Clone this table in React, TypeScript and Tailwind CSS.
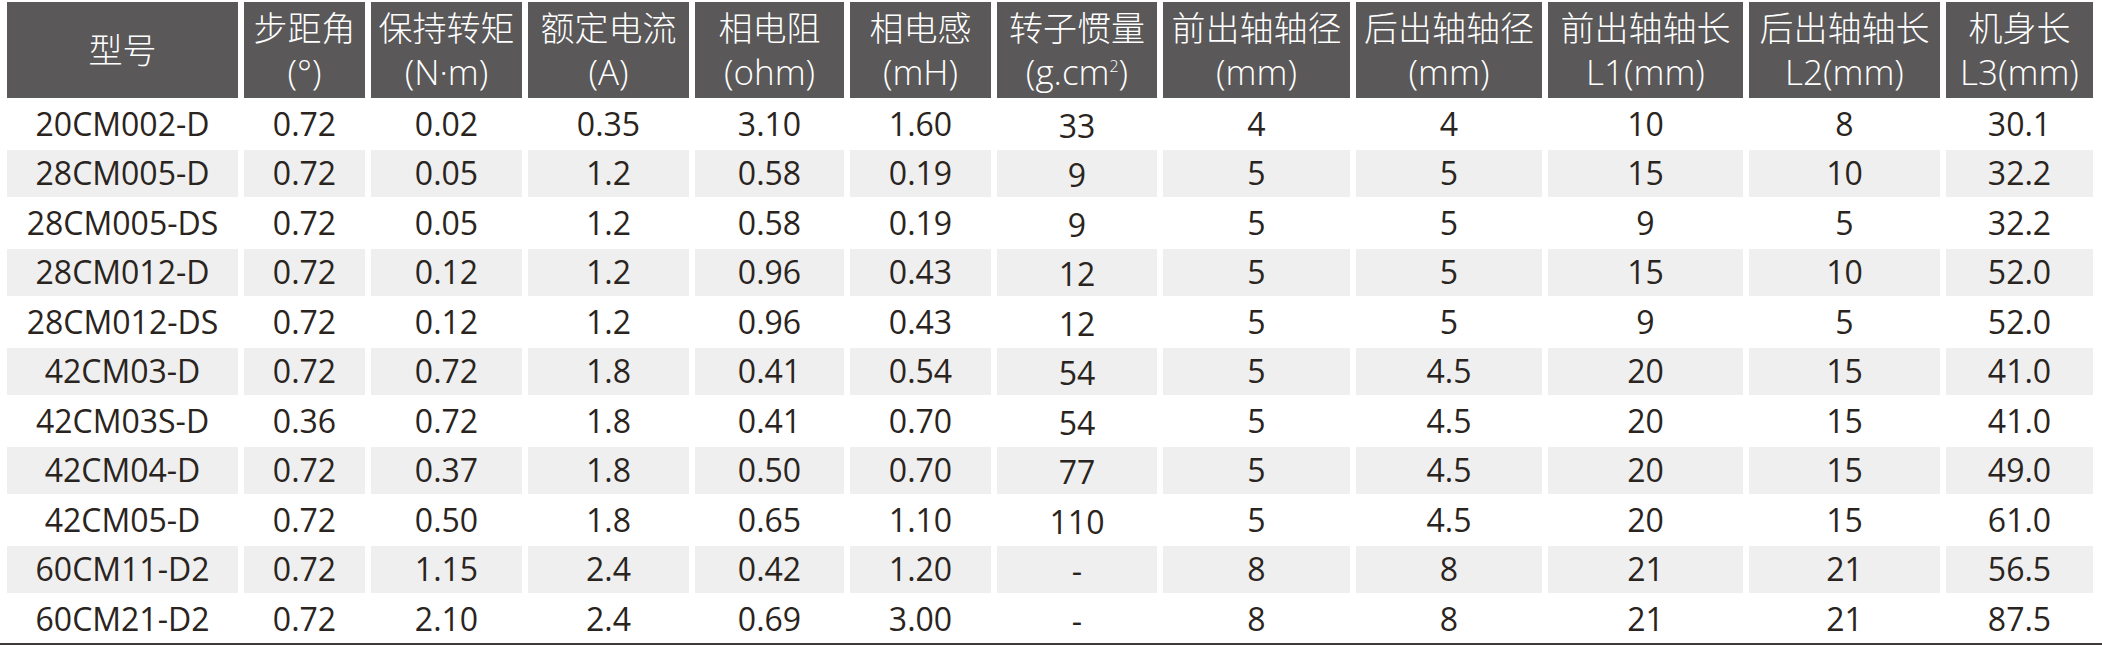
const headers: { top: string; bottom?: React.ReactNode }[] = [
  { top: '型号' },
  { top: '步距角', bottom: '(°)' },
  { top: '保持转矩', bottom: '(N·m)' },
  { top: '额定电流', bottom: '(A)' },
  { top: '相电阻', bottom: '(ohm)' },
  { top: '相电感', bottom: '(mH)' },
  {
    top: '转子惯量',
    bottom: (
      <>
        (g.cm<sup className="text-[16px] relative -top-[13px]">2</sup>)
      </>
    ),
  },
  { top: '前出轴轴径', bottom: '(mm)' },
  { top: '后出轴轴径', bottom: '(mm)' },
  { top: '前出轴轴长', bottom: 'L1(mm)' },
  { top: '后出轴轴长', bottom: 'L2(mm)' },
  { top: '机身长', bottom: 'L3(mm)' },
]

const rows: string[][] = [
  ['20CM002-D', '0.72', '0.02', '0.35', '3.10', '1.60', '33', '4', '4', '10', '8', '30.1'],
  ['28CM005-D', '0.72', '0.05', '1.2', '0.58', '0.19', '9', '5', '5', '15', '10', '32.2'],
  ['28CM005-DS', '0.72', '0.05', '1.2', '0.58', '0.19', '9', '5', '5', '9', '5', '32.2'],
  ['28CM012-D', '0.72', '0.12', '1.2', '0.96', '0.43', '12', '5', '5', '15', '10', '52.0'],
  ['28CM012-DS', '0.72', '0.12', '1.2', '0.96', '0.43', '12', '5', '5', '9', '5', '52.0'],
  ['42CM03-D', '0.72', '0.72', '1.8', '0.41', '0.54', '54', '5', '4.5', '20', '15', '41.0'],
  ['42CM03S-D', '0.36', '0.72', '1.8', '0.41', '0.70', '54', '5', '4.5', '20', '15', '41.0'],
  ['42CM04-D', '0.72', '0.37', '1.8', '0.50', '0.70', '77', '5', '4.5', '20', '15', '49.0'],
  ['42CM05-D', '0.72', '0.50', '1.8', '0.65', '1.10', '110', '5', '4.5', '20', '15', '61.0'],
  ['60CM11-D2', '0.72', '1.15', '2.4', '0.42', '1.20', '-', '8', '8', '21', '21', '56.5'],
  ['60CM21-D2', '0.72', '2.10', '2.4', '0.69', '3.00', '-', '8', '8', '21', '21', '87.5'],
]

export default function App() {
  return (
    <div
      className="w-[2102px] h-[645px] bg-white overflow-hidden flex flex-col"
      style={{ fontFamily: '"Open Sans", "Noto Sans CJK SC", sans-serif' }}
    >
      <div className="pt-[2px] pl-[7px] grid grid-cols-[231px_121px_151px_161px_149px_141px_160px_187px_186px_195px_191px_147px] gap-x-[6px] gap-y-[2px]">
        {headers.map((h, i) => (
          <div
            key={i}
            className="h-[96px] bg-[#5a5858] text-white text-[34px] font-light leading-[43px] flex flex-col items-center justify-center whitespace-nowrap"
          >
            <span>{h.top}</span>
            {h.bottom && <span className="text-[35px]">{h.bottom}</span>}
          </div>
        ))}
        {rows.map((row, r) =>
          row.map((cell, c) => (
            <div
              key={`${r}-${c}`}
              className={`h-[47.5px] flex items-center justify-center text-[32px] text-[#2a2420] whitespace-nowrap ${
                r % 2 === 1 ? 'bg-[#efefef]' : 'bg-white'
              } ${c === 6 ? 'pt-[4px]' : ''}`}
            >
              {cell}
            </div>
          ))
        )}
      </div>
      <div className="mt-auto h-[3px] bg-[#3e3a39]" />
    </div>
  )
}
